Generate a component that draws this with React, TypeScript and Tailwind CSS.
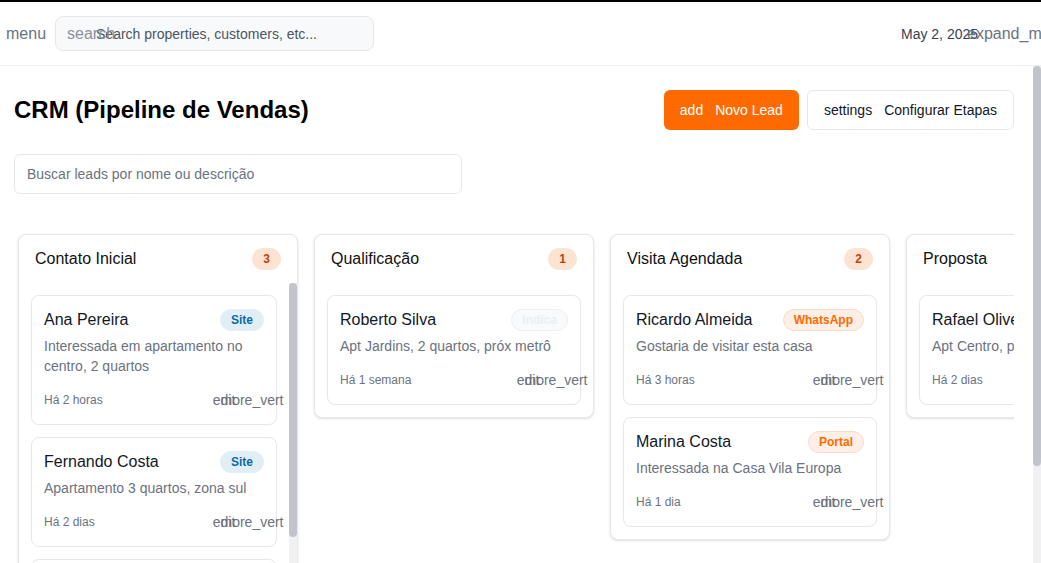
type Lead = {
  name: string;
  source: string;
  desc: string;
  time: string;
};

type Stage = {
  title: string;
  leads: Lead[];
  scroll?: boolean;
};

const sourceStyle: Record<string, string> = {
  Site: 'bg-[#e2eef6] border-[#e2eef6] text-[#0b6aa2]',
  Indica: 'bg-[#f9fafb] border-[#eceef1] text-[#eceef1]',
  WhatsApp: 'bg-[#feefe6] border-[#f7ddcc] text-[#ff6a00]',
  Portal: 'bg-[#feefe6] border-[#f7ddcc] text-[#ff6a00]',
};

const stages: Stage[] = [
  {
    title: 'Contato Inicial',
    scroll: true,
    leads: [
      { name: 'Ana Pereira', source: 'Site', desc: 'Interessada em apartamento no centro, 2 quartos', time: 'Há 2 horas' },
      { name: 'Fernando Costa', source: 'Site', desc: 'Apartamento 3 quartos, zona sul', time: 'Há 2 dias' },
      { name: 'Juliana Santos', source: 'Indica', desc: 'Casa com quintal, até 500 mil', time: 'Há 4 dias' },
    ],
  },
  {
    title: 'Qualificação',
    leads: [{ name: 'Roberto Silva', source: 'Indica', desc: 'Apt Jardins, 2 quartos, próx metrô', time: 'Há 1 semana' }],
  },
  {
    title: 'Visita Agendada',
    leads: [
      { name: 'Ricardo Almeida', source: 'WhatsApp', desc: 'Gostaria de visitar esta casa', time: 'Há 3 horas' },
      { name: 'Marina Costa', source: 'Portal', desc: 'Interessada na Casa Vila Europa', time: 'Há 1 dia' },
    ],
  },
  {
    title: 'Proposta',
    leads: [{ name: 'Rafael Oliveira', source: 'Site', desc: 'Apt Centro, proposta enviada', time: 'Há 2 dias' }],
  },
  {
    title: 'Fechado',
    leads: [],
  },
];

// scrollbars are hidden by the browser, so draw the thin track + thumb ourselves
function ScrollTrack({ thumb }: { thumb: string }) {
  return (
    <div className="w-2 shrink-0 bg-[#f1f1f3]">
      <div className={`w-2 rounded-full bg-[#c1c4cb] ${thumb}`} />
    </div>
  );
}

function LeadCard({ lead }: { lead: Lead }) {
  return (
    <div className="rounded-lg border border-[#e5e7eb] bg-white p-3">
      <div className="flex h-6 items-center justify-between">
        <span className="text-base text-[#111827]">{lead.name}</span>
        <span
          className={`rounded-full border px-2.5 text-xs font-bold leading-5 ${sourceStyle[lead.source]}`}
        >
          {lead.source}
        </span>
      </div>
      <p className="mt-1 text-sm leading-5 text-[#6b7280]">{lead.desc}</p>
      <div className="mt-3 flex h-6 items-center justify-between">
        <span className="text-xs text-[#6b7280]">{lead.time}</span>
        <div className="flex gap-1 text-sm text-[#6b7280]">
          <span className="flex h-6 w-6 items-center justify-center whitespace-nowrap">edit</span>
          <span className="flex h-6 w-6 items-center justify-center whitespace-nowrap">more_vert</span>
        </div>
      </div>
    </div>
  );
}

function Column({ stage }: { stage: Stage }) {
  const list = (
    <div className={`flex min-w-0 flex-1 flex-col gap-3 p-3 ${stage.scroll ? 'overflow-hidden' : ''}`}>
      {stage.leads.map((l) => (
        <LeadCard key={l.name} lead={l} />
      ))}
    </div>
  );

  return (
    <div className="flex w-[280px] shrink-0 flex-col self-start rounded-lg border border-[#e5e7eb] bg-white shadow-sm">
      <div className="flex h-12 items-center justify-between px-4">
        <span className="text-base text-[#111]">{stage.title}</span>
        <span className="flex h-[22px] min-w-[29px] items-center justify-center rounded-full bg-[#fde4d2] px-2 text-xs font-bold text-[#c2410c]">
          {stage.leads.length}
        </span>
      </div>
      {stage.scroll ? (
        <div className="flex h-[318px]">
          {list}
          <ScrollTrack thumb="h-[254px]" />
        </div>
      ) : (
        list
      )}
    </div>
  );
}

export default function App() {
  return (
    <div
      className="flex h-screen flex-col bg-white text-[#111827]"
      style={{ fontFamily: '"Liberation Sans", Arial, sans-serif' }}
    >
      <header className="flex h-[66px] shrink-0 items-center border-t-2 border-b border-t-black border-b-[#eeeeee] bg-white pl-[6px]">
        <span className="text-base text-[#6b7280]">menu</span>
        <div className="relative ml-[9px] flex h-[35px] w-[319px] items-center rounded-lg border border-[#e5e7eb] bg-[#f8f9fa]">
          <span className="absolute left-[11px] text-base text-[#8b9099]">search</span>
          <input
            className="h-full w-full bg-transparent pl-[40px] text-sm text-[#374151] outline-none placeholder:text-[#4b5563]"
            placeholder="Search properties, customers, etc..."
          />
        </div>
        <div className="ml-auto flex items-center pr-[50px]">
          <span className="w-[66px] whitespace-nowrap text-sm text-[#374151]">May 2, 2025</span>
          <span className="w-6 whitespace-nowrap text-base text-[#6b7280]">expand_more</span>
        </div>
      </header>

      <div className="flex min-h-0 flex-1">
        <main className="min-w-0 flex-1 overflow-hidden pb-12 pl-[14px] pr-[19px] pt-6">
          <div className="flex items-center justify-between">
            <h1 className="text-2xl font-bold text-black">CRM (Pipeline de Vendas)</h1>
            <div className="flex gap-2">
              <button className="flex h-10 items-center gap-3 rounded-md bg-[#ff6a00] px-4 text-sm text-white">
                <span>add</span>
                <span>Novo Lead</span>
              </button>
              <button className="flex h-10 items-center gap-3 rounded-md border border-[#e5e7eb] bg-white px-4 text-sm text-[#111827]">
                <span>settings</span>
                <span>Configurar Etapas</span>
              </button>
            </div>
          </div>

          <input
            className="mt-6 h-10 w-full max-w-md rounded-md border border-[#e5e7eb] px-3 text-sm outline-none placeholder:text-[#6b7280]"
            placeholder="Buscar leads por nome ou descrição"
          />

          <div className="mt-9 flex gap-4 overflow-hidden p-1 pb-4">
            {stages.map((s) => (
              <Column key={s.title} stage={s} />
            ))}
          </div>
        </main>
        <ScrollTrack thumb="h-[400px]" />
      </div>
    </div>
  );
}
